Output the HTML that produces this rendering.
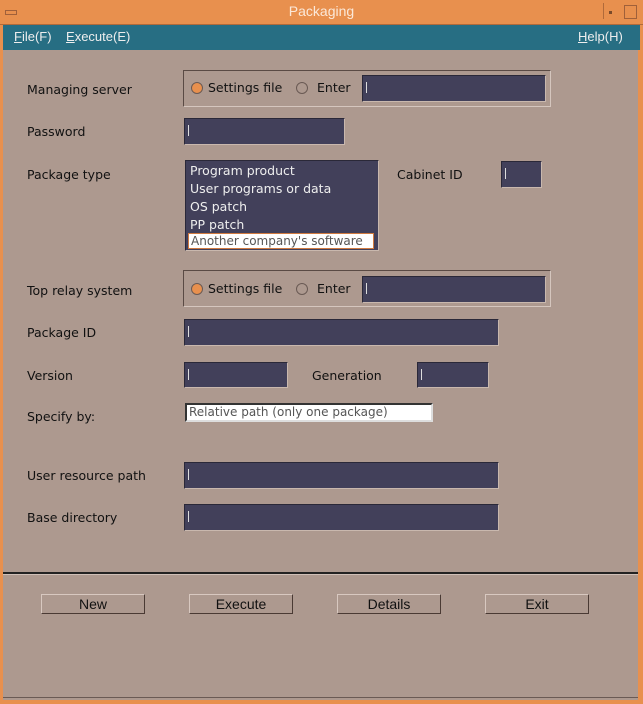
<html><head><style>
body{margin:0;width:643px;height:704px;background:#e8904e;overflow:hidden;font-family:"DejaVu Sans","Liberation Sans",sans-serif;font-size:12.5px;color:#111}
.a{position:absolute}
.f,.l{position:absolute;background:#42405a;border-top:1px solid #2a2838;border-left:1px solid #2a2838;border-bottom:1px solid #c9b8ae;border-right:1px solid #c9b8ae;box-sizing:border-box}
.f:before{content:"";position:absolute;left:3px;top:6px;width:1px;height:11px;background:#ddd}
.g{position:absolute;border:1px solid #5a4a44;border-right-color:#d5c6be;border-bottom-color:#d5c6be;box-sizing:border-box}
.r{position:absolute;width:12px;height:12px;border-radius:50%;border:1px solid #6a5a54;box-sizing:border-box;background:#ad998f}
.r.on{background:#e8904e}
.b{position:absolute;top:594px;width:104px;height:20px;border:1px solid #d8c8c0;border-right-color:#4a3a34;border-bottom-color:#4a3a34;box-sizing:border-box;text-align:center;line-height:18px;font-family:"Liberation Sans",sans-serif;font-size:14px}
.w{color:#eee}
</style></head><body>
<div class="a" style="left:0;top:0;width:643px;height:25px;background:#e8904e;border-bottom:1px solid #b06a3a;box-sizing:border-box"></div>
<div class="a" style="left:0;top:3px;width:643px;text-align:center;color:#fbe8d8;font-size:14px;font-family:'Liberation Sans',sans-serif">Packaging</div>
<div class="a" style="left:5px;top:10px;width:10px;height:3px;border:1px solid #a0603a"></div>
<div class="a" style="left:603px;top:3px;width:14px;height:16px;border-left:1px solid #b06a3a"></div>
<div class="a" style="left:609px;top:11px;width:3px;height:3px;background:#7a4a2a"></div>
<div class="a" style="left:624px;top:5px;width:11px;height:12px;border:1px solid #a0603a"></div>
<div class="a" style="left:3px;top:25px;width:637px;height:25px;background:#276e83"></div>
<div class="a w" style="left:14px;top:29px;font-size:13px;font-family:'Liberation Sans',sans-serif"><u>F</u>ile(F)&nbsp;&nbsp;&nbsp;&nbsp;<u>E</u>xecute(E)</div>
<div class="a w" style="left:578px;top:29px;font-size:13px;font-family:'Liberation Sans',sans-serif"><u>H</u>elp(H)</div>
<div class="a" style="left:3px;top:50px;width:635px;height:650px;background:#ad998f"></div>

<div class="a" style="left:27px;top:82px">Managing server</div>
<div class="g" style="left:183px;top:70px;width:368px;height:37px"></div>
<div class="r on" style="left:191px;top:82px"></div><div class="a" style="left:208px;top:80px">Settings file</div>
<div class="r" style="left:296px;top:82px"></div><div class="a" style="left:317px;top:80px">Enter</div>
<div class="f" style="left:362px;top:75px;width:184px;height:27px"></div>

<div class="a" style="left:27px;top:124px">Password</div>
<div class="f" style="left:184px;top:118px;width:161px;height:27px"></div>

<div class="a" style="left:27px;top:167px">Package type</div>
<div class="l" style="left:185px;top:160px;width:194px;height:91px;"></div>
<div class="a w" style="left:190px;top:162px;line-height:18px">Program product<br>User programs or data<br>OS patch<br>PP patch</div>
<div class="a" style="left:188px;top:233px;width:186px;height:16px;background:#fff;border:1px solid #d07a40;box-sizing:border-box;font-size:12px;color:#555;line-height:14px;padding-left:2px;white-space:nowrap;overflow:hidden">Another company's software</div>
<div class="a" style="left:397px;top:167px">Cabinet ID</div>
<div class="f" style="left:501px;top:161px;width:41px;height:27px"></div>

<div class="a" style="left:27px;top:283px">Top relay system</div>
<div class="g" style="left:183px;top:270px;width:368px;height:37px"></div>
<div class="r on" style="left:191px;top:283px"></div><div class="a" style="left:208px;top:281px">Settings file</div>
<div class="r" style="left:296px;top:283px"></div><div class="a" style="left:317px;top:281px">Enter</div>
<div class="f" style="left:362px;top:276px;width:184px;height:27px"></div>

<div class="a" style="left:27px;top:325px">Package ID</div>
<div class="f" style="left:184px;top:319px;width:315px;height:27px"></div>

<div class="a" style="left:27px;top:368px">Version</div>
<div class="f" style="left:184px;top:362px;width:104px;height:26px"></div>
<div class="a" style="left:312px;top:368px">Generation</div>
<div class="f" style="left:417px;top:362px;width:72px;height:26px"></div>

<div class="a" style="left:27px;top:409px">Specify by:</div>
<div class="a" style="left:185px;top:403px;width:248px;height:19px;background:#fff;border:2px solid #333;border-right-color:#ddd;border-bottom-color:#ddd;box-sizing:border-box;font-size:12px;color:#555;line-height:15px;padding-left:2px">Relative path (only one package)</div>

<div class="a" style="left:27px;top:468px">User resource path</div>
<div class="f" style="left:184px;top:462px;width:315px;height:27px"></div>
<div class="a" style="left:27px;top:510px">Base directory</div>
<div class="f" style="left:184px;top:504px;width:315px;height:27px"></div>

<div class="a" style="left:3px;top:572px;width:635px;height:2px;background:#222;border-bottom:1px solid #d0c0b8"></div>
<div class="b" style="left:41px">New</div>
<div class="b" style="left:189px">Execute</div>
<div class="b" style="left:337px">Details</div>
<div class="b" style="left:485px">Exit</div>
<div class="a" style="left:3px;top:697px;width:635px;height:1px;background:#6a5a54"></div>
</body></html>
